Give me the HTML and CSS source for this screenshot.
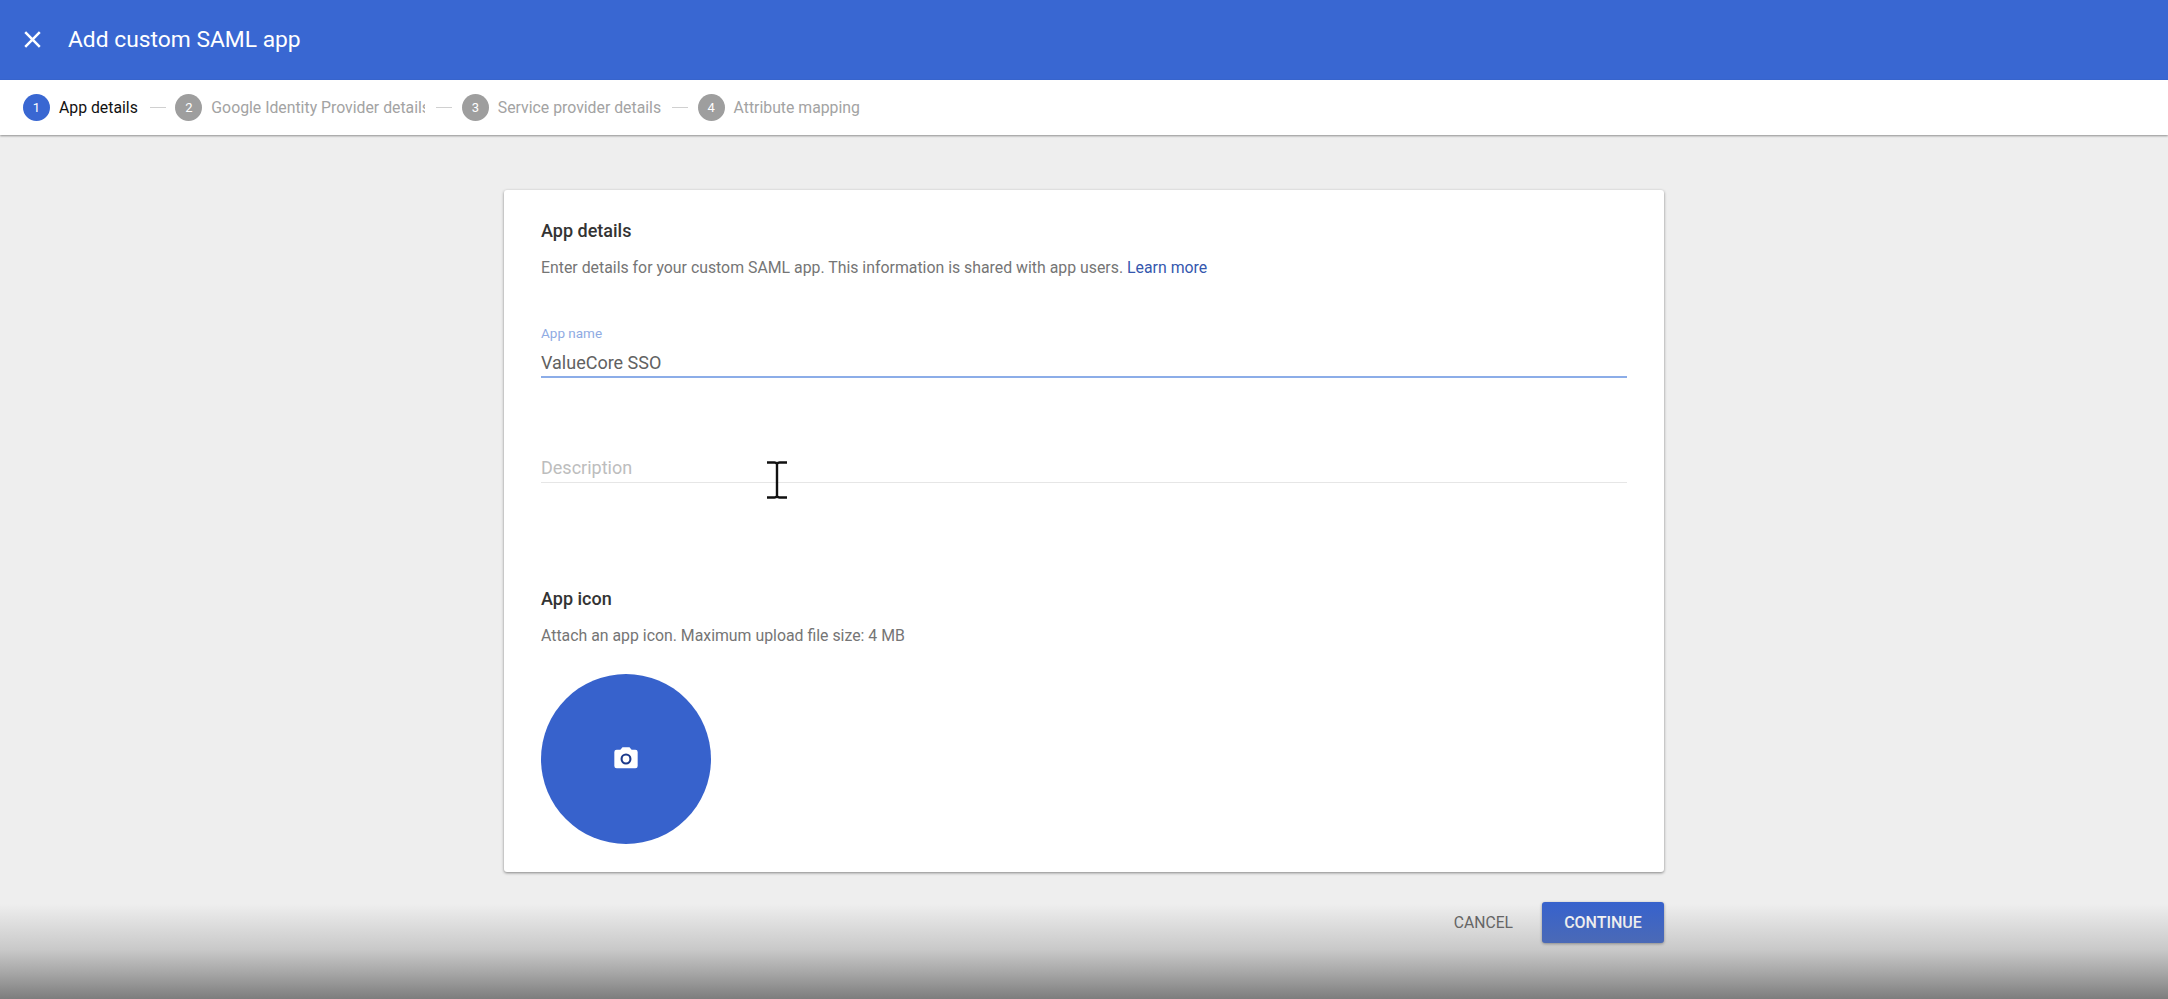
FILE: index.html
```html
<!DOCTYPE html>
<html lang="en">
<head>
<meta charset="utf-8">
<title>Add custom SAML app</title>
<link rel="stylesheet" href="styles.css">
</head>
<body>
<div class="page">
  <header class="topbar">
    <svg class="close-icon" viewBox="0 0 24 24" aria-hidden="true"><path d="M5 5 19 19M19 5 5 19"/></svg>
    <h1 class="topbar-title">Add custom SAML app</h1>
  </header>
  <nav class="stepper">
    <div class="step step-active"><span class="step-num">1</span><span class="step-label">App details</span></div>
    <span class="step-line"></span>
    <div class="step"><span class="step-num">2</span><span class="step-label step-label-clip">Google Identity Provider details</span></div>
    <span class="step-line"></span>
    <div class="step"><span class="step-num">3</span><span class="step-label">Service provider details</span></div>
    <span class="step-line"></span>
    <div class="step"><span class="step-num">4</span><span class="step-label">Attribute mapping</span></div>
  </nav>
  <main class="content">
    <section class="card">
      <h2 class="card-heading">App details</h2>
      <p class="card-text">Enter details for your custom SAML app. This information is shared with app users. <a class="link" href="#">Learn more</a></p>
      <div class="field field-focus">
        <label class="field-label">App name</label>
        <div class="field-value">ValueCore SSO</div>
      </div>
      <div class="field field-empty">
        <div class="field-placeholder">Description</div>
      </div>
      <h2 class="card-heading icon-heading">App icon</h2>
      <p class="card-text">Attach an app icon. Maximum upload file size: 4 MB</p>
      <div class="upload">
        <svg class="camera" viewBox="0 0 24 24" aria-hidden="true">
          <path fill="#fff" d="M9 2 7.2 4H4a2 2 0 0 0-2 2v12a2 2 0 0 0 2 2h16a2 2 0 0 0 2-2V6a2 2 0 0 0-2-2h-3.200L15 2z"/>
          <circle cx="12" cy="12" r="3.800" fill="none" stroke="#1c3a8c" stroke-width="1.800"/>
        </svg>
      </div>
    </section>
    <div class="actions">
      <button class="btn btn-text">CANCEL</button>
      <button class="btn btn-primary">CONTINUE</button>
    </div>
  </main>
  <div class="bottom-fade"></div>
  <svg class="text-cursor" viewBox="0 0 22 38" aria-hidden="true"><path d="M1 1.500h7.500c1.200 0 2 .5 2.500 1.300.5-.8 1.300-1.300 2.500-1.300H21M11 3v32M1 36.500h7.500c1.200 0 2-.5 2.500-1.300.5.8 1.300 1.300 2.500 1.300H21"/></svg>
</div>
</body>
</html>
```

FILE: styles.css
```css
* { box-sizing: border-box; }
html, body { margin: 0; height: 100%; }
body { font-family: Roboto, "Liberation Sans", sans-serif; background: #eeeeee; overflow: hidden; }
.page { position: relative; height: 999px; display: flex; flex-direction: column; overflow: hidden; }

.topbar { height: 80px; background: #3967d2; display: flex; align-items: center; padding: 0 0 2px 20px; flex: none; }
.close-icon { width: 25px; height: 25px; fill: none; stroke: #fff; stroke-width: 2.400; flex: none; }
.topbar-title { margin: 0 0 0 23px; font-size: 22.800px; font-weight: 400; color: #fff; }

.stepper { height: 55px; background: #fff; display: flex; align-items: center; padding-left: 23px; flex: none; box-shadow: 0 1px 2px rgba(0,0,0,.4); position: relative; }
.step { display: flex; align-items: center; }
.step-num { width: 27px; height: 27px; border-radius: 50%; background: #9e9e9e; color: #fff; font-size: 13px; display: flex; align-items: center; justify-content: center; margin-right: 9px; }
.step-active .step-num { background: #3967d2; }
.step-label { font-size: 15.800px; color: #a3a3a3; white-space: nowrap; }
.step-active .step-label { color: #111; padding-right: 1px; }
.step-label-clip { width: 214px; overflow: hidden; }
.step-line { width: 16px; height: 1px; background: #d0d0d0; margin: 0 9.500px 0 11px; }

.content { width: 1160px; margin: 55px 0 0 504px; }
.card { height: 682px; background: #fff; border-radius: 3px; box-shadow: 0 1px 3px rgba(0,0,0,.45); padding: 29px 37px 0 37px; }
.card-heading { margin: 0; font-size: 18px; line-height: 24px; font-weight: 500; color: #333; }
.card-text { margin: 14px 0 0; font-size: 15.850px; line-height: 22px; color: #757575; }
.link { color: #3557ae; text-decoration: none; }

.field { border-bottom: 1px solid #e6e6e6; }
.field-focus { margin-top: 46px; border-bottom: 2px solid #8cade8; height: 53px; }
.field-label { display: block; font-size: 13.500px; line-height: 16px; color: #8fabe3; }
.field-value { margin-top: 10px; font-size: 18px; line-height: 24px; color: #616161; }
.field-empty { margin-top: 78px; height: 27px; }
.field-placeholder { font-size: 18px; line-height: 24px; color: #bdbdbd; }
.icon-heading { margin-top: 104px; }

.upload { width: 170px; height: 170px; border-radius: 50%; background: #3762cc; margin-top: 27px; display: flex; align-items: center; justify-content: center; }
.camera { width: 28px; height: 28px; }

.actions { display: flex; justify-content: flex-end; align-items: center; margin-top: 30px; }
.btn { font-family: inherit; font-size: 15.700px; border: 0; background: none; height: 41px; padding: 0; border-radius: 3px; }
.btn-text { color: #616161; margin-right: 29px; }
.btn-primary { width: 122px; background: #3762cc; color: #fff; font-weight: 500; font-size: 16px; box-shadow: 0 1px 3px rgba(0,0,0,.4); }

.bottom-fade { position: absolute; left: 0; right: 0; bottom: 0; height: 95px; background: linear-gradient(to bottom, rgba(125,125,125,0), rgba(125,125,125,.33) 48%, rgba(125,125,125,.65) 74%, rgba(125,125,125,1)); pointer-events: none; }
.text-cursor { position: absolute; left: 766px; top: 461px; width: 22px; height: 38px; fill: none; stroke: #111; stroke-width: 2.400; }
```
